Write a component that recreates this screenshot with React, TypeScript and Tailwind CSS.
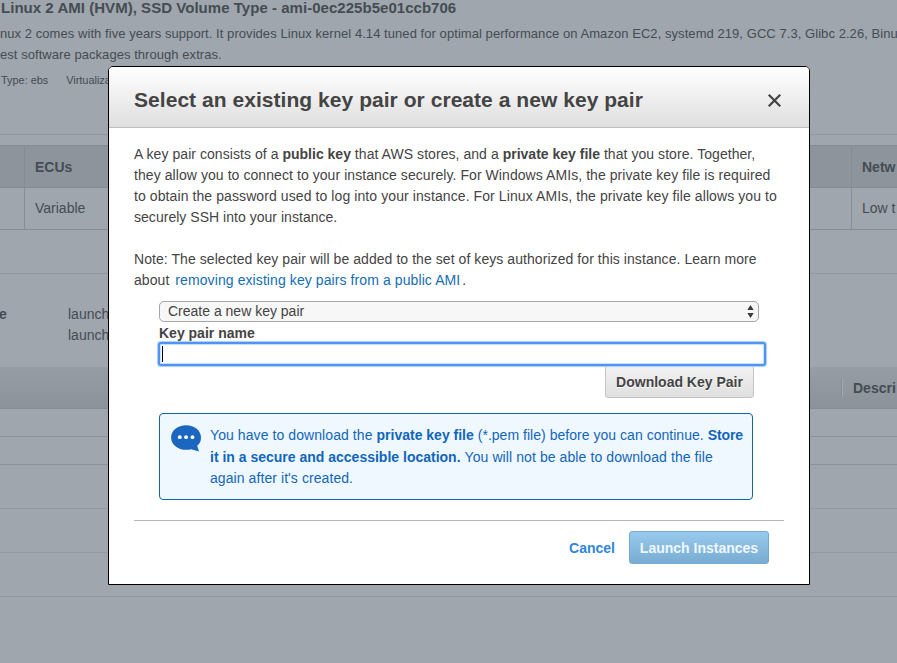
import React from "react";

function PageBehind() {
  return (
    <div className="flex h-full flex-col overflow-hidden whitespace-nowrap bg-[#9fa6ad] text-[#454c53]">
      <div className="h-[134px] shrink-0 overflow-hidden">
        <div className="h-[23px] pl-px text-[15px] font-bold leading-[16px] tracking-[0.035px]">
          Linux 2 AMI (HVM), SSD Volume Type - ami-0ec225b5e01ccb706
        </div>
        <div className="h-[21px] text-[13px] leading-[21px] tracking-[0.06px]">
          nux 2 comes with five years support. It provides Linux kernel 4.14 tuned for optimal performance on Amazon EC2, systemd 219, GCC 7.3, Glibc 2.26, Binu
        </div>
        <div className="h-[21px] text-[13px] leading-[21px] tracking-[0.055px]">est software packages through extras.</div>
        <div className="mt-[7px] flex gap-[18px] pl-px text-[11px] leading-4 tracking-[-0.05px]">
          <span>Type: ebs</span>
          <span>Virtualiza</span>
        </div>
      </div>
      <div className="h-[11px] shrink-0 border-t border-[#9198a0]" />
      <div className="flex h-[43px] shrink-0 border-y border-[#858c94] bg-[#8d949b] text-sm font-bold leading-[43px]">
        <div className="w-[25px] shrink-0 border-r border-[#858c94]" />
        <div className="w-[827px] shrink-0 border-r border-[#858c94] pl-[10px]">ECUs</div>
        <div className="pl-[10px]">Netw</div>
      </div>
      <div className="flex h-[42px] shrink-0 border-b border-[#858c94] text-sm leading-[40px]">
        <div className="w-[25px] shrink-0 border-r border-[#858c94]" />
        <div className="w-[827px] shrink-0 border-r border-[#858c94] pl-[10px]">Variable</div>
        <div className="pl-[10px]">Low t</div>
      </div>
      <div className="h-[43px] shrink-0" />
      <div className="flex h-[94px] shrink-0 border-t border-[#9198a0] pt-[30px] text-sm leading-[21px]">
        <div className="-ml-px w-[69px] font-bold">e</div>
        <div>
          launch
          <br />
          launch
        </div>
      </div>
      <div className="flex h-[42px] shrink-0 items-center border-b border-[#858c94] bg-linear-to-b from-[#969da4] to-[#8b9299] text-sm font-bold">
        <div className="h-[19px] w-[842px] shrink-0 border-r border-[#858c94]" />
        <div className="h-[19px] border-l border-[#a3aab0] pl-[10px] leading-[21px]">Descri</div>
      </div>
      <div className="h-[28px] shrink-0 border-b border-[#8b9299]" />
      <div className="h-[28px] shrink-0 border-b border-[#8b9299]" />
      <div className="h-[44px] shrink-0 border-b border-[#939aa1]" />
      <div className="h-[44px] shrink-0 border-b border-[#939aa1]" />
      <div className="h-[44px] shrink-0 border-b border-[#939aa1]" />
    </div>
  );
}

function KeyPairDialog() {
  return (
    <div className="absolute left-[108px] top-[66px] flex h-[519px] w-[702px] flex-col overflow-hidden whitespace-nowrap rounded-t-[5px] border border-black bg-white text-sm leading-[21px] text-[#444]">
      <div className="flex h-[61px] shrink-0 items-center justify-between border-b border-[#bfbfbf] bg-linear-to-b from-white to-[#dfdfdf] pl-[25px] pr-[28px]">
        <h1 className="pt-[6px] text-[21px] font-bold leading-6 tracking-[0.045px]">Select an existing key pair or create a new key pair</h1>
        <svg className="mt-[7px] size-[13px]" viewBox="0 0 13 13" fill="none" stroke="#444" strokeWidth="2.2">
          <path d="M0.7 0.7 L12.3 12.3 M12.3 0.7 L0.7 12.3" />
        </svg>
      </div>
      <div className="px-[25px] pt-[16px] tracking-[0.07px]">
        <p className="tracking-[0.055px]">A key pair consists of a <b className="tracking-normal">public key</b> that AWS stores, and a <b className="tracking-normal">private key file</b> that you store. Together,</p>
        <p>they allow you to connect to your instance securely. For Windows AMIs, the private key file is required</p>
        <p className="tracking-[0.09px]">to obtain the password used to log into your instance. For Linux AMIs, the private key file allows you to</p>
        <p className="tracking-[0.03px]">securely SSH into your instance.</p>
        <p className="mt-[21px] tracking-[0.065px]">Note: The selected key pair will be added to the set of keys authorized for this instance. Learn more</p>
        <p>about <a className="ml-[2px] tracking-[0.09px] text-[#146eb4]">removing existing key pairs from a public AMI</a><span className="ml-[2px]">.</span></p>
      </div>
      <div className="ml-[50px] mt-[10px] flex flex-col">
        <div className="flex h-[21px] w-[600px] items-center justify-between rounded-[5px] border border-[#a6a6a6] bg-[#f7f7f7] pl-2 pr-[4px]">
          <span>Create a new key pair</span>
          <svg className="h-[13px] w-[7px]" viewBox="0 0 7 13" fill="#3c3c3c">
            <path d="M3.5 0 L6.7 5 H0.3 Z M3.5 13 L6.7 8 H0.3 Z" />
          </svg>
        </div>
        <div className="h-[20px] font-bold leading-[22px]">Key pair name</div>
        <div className="relative z-10 -ml-px flex h-[24px] w-[608px] items-center rounded-[3px] border-2 border-[#4f94f0] bg-white pl-[2px] shadow-[0_0_1px_1px_#a9cdfa,inset_0_0_1px_1px_#c3dcfc]">
          <div className="h-4 w-px bg-black" />
        </div>
        <div className="-mt-px ml-[446px] flex h-[33px] w-[149px] items-center justify-center rounded-[3px] border border-[#c4c4c4] bg-linear-to-b from-[#f3f3f3] to-[#dfdfdf] pt-[2px] font-bold [text-shadow:0_1px_0_#fff]">
          Download Key Pair
        </div>
        <div className="mt-[15px] flex h-[87px] w-[594px] rounded-[4px] border border-[#0c66b0] bg-[#f0f8ff] pl-[11px] pt-[11px] leading-[21.5px] text-[#1166bb]">
          <svg className="h-[28px] w-[31px] shrink-0" viewBox="0 0 31 28">
            <path fill="#1a66c0" d="M15.1 0.2 C23.5 0.2 30 5.5 30 12.4 C30 16 28.9 18.5 26.2 20.8 L28 26.6 L20.2 24.2 C18.5 24.7 17 24.8 15.1 24.8 C6.8 24.8 0.1 19.4 0.1 12.4 C0.1 5.5 6.8 0.2 15.1 0.2 Z" />
            <g fill="#fff">
              <circle cx="8.8" cy="12.2" r="1.9" />
              <circle cx="15.1" cy="12.2" r="1.9" />
              <circle cx="21.5" cy="12.2" r="1.9" />
            </g>
          </svg>
          <div className="ml-[8px] tracking-[0.075px]">
            <p className="tracking-[0.03px]"><span className="tracking-[0.08px]">You have to download the </span><b className="tracking-normal">private key file</b> (*.pem file) before you can continue. <b className="tracking-[-0.1px]">Store</b></p>
            <p><b className="tracking-normal">it in a secure and accessible location.</b> <span className="tracking-[0.09px]">You will not be able to download the file</span></p>
            <p>again after it's created.</p>
          </div>
        </div>
      </div>
      <div className="mx-[25px] mt-[20px] flex items-center justify-end border-t border-[#b7b7b7] pr-[15px] pt-[10px] font-bold">
        <a className="mr-[14px] pt-[2px] text-[#2e86dc]">Cancel</a>
        <div className="flex h-[33px] w-[140px] items-center justify-center rounded-[3px] border border-[#76a9cf] bg-linear-to-b from-[#98caed] to-[#78acd2] pt-[2px] text-[#f0f7fc]">
          Launch Instances
        </div>
      </div>
    </div>
  );
}

export default function App() {
  return (
    <div className="relative h-[663px] w-[897px] overflow-hidden font-['Liberation_Sans',Arial,sans-serif]">
      <PageBehind />
      <KeyPairDialog />
    </div>
  );
}
